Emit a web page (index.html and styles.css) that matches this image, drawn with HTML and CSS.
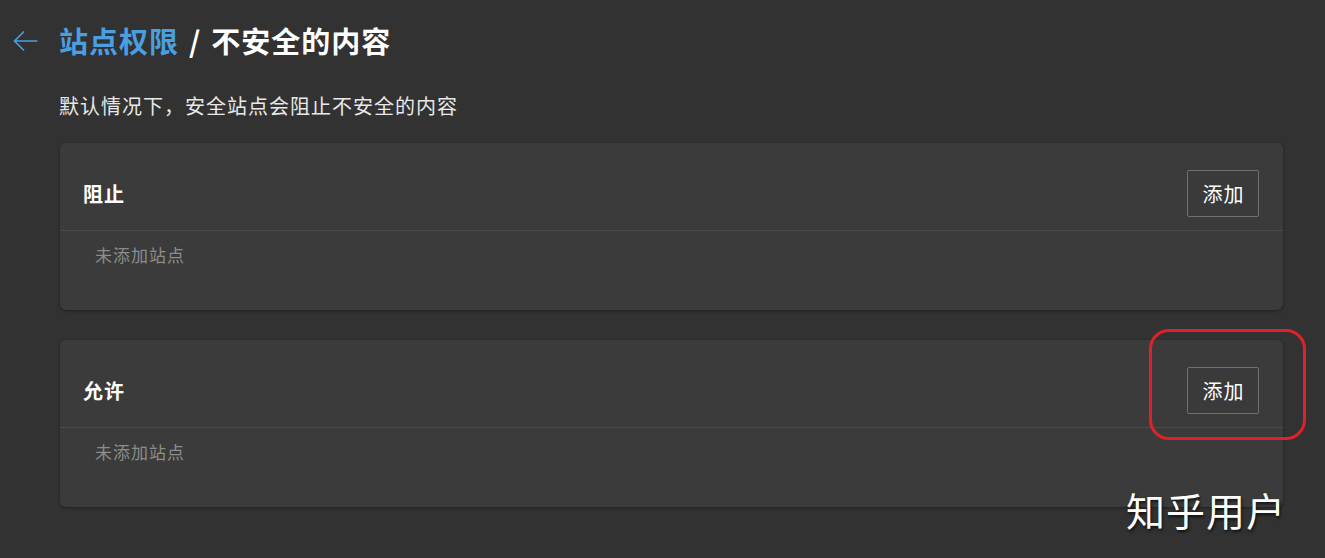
FILE: index.html
```html
<!DOCTYPE html>
<html lang="zh-CN">
<head>
  <meta charset="UTF-8">
  <title>站点权限 / 不安全的内容</title>
  <link rel="stylesheet" href="styles.css">
</head>
<body>
  <div class="page">
    <header class="page-header">
      <a class="back" href="#" aria-label="返回">
        <svg width="26" height="22" viewBox="0 0 26 22">
          <path d="M25.5 11H2.5M12 1.5L2.5 11L12 20.5" fill="none" stroke="#4a9fe0" stroke-width="1.6"/>
        </svg>
      </a>
      <h1><span class="crumb">站点权限</span><span class="sep">/</span>不安全的内容</h1>
    </header>

    <p class="intro">默认情况下，安全站点会阻止不安全的内容</p>

    <section class="card">
      <div class="card-head">
        <h2>阻止</h2>
        <button type="button">添加</button>
      </div>
      <div class="card-body">未添加站点</div>
    </section>

    <section class="card">
      <div class="card-head">
        <h2>允许</h2>
        <div class="mark">
          <button type="button">添加</button>
        </div>
      </div>
      <div class="card-body">未添加站点</div>
    </section>
  </div>

  <div class="watermark">知乎用户</div>
</body>
</html>
```

FILE: styles.css
```css
html, body {
  margin: 0;
  padding: 0;
  background: #323232;
  height: 100%;
}

body {
  font-family: "Noto Sans CJK SC", "Noto Sans", sans-serif;
  color: #fff;
  overflow: hidden;
}

.page {
  padding: 16px 42px 0 12px;
}

.page-header {
  display: flex;
  align-items: center;
  height: 48px;
}

.back {
  display: flex;
  width: 47px;
  margin-top: 2px;
}

h1 {
  margin: 0;
  font-size: 29px;
  font-weight: bold;
  letter-spacing: 1px;
}

.crumb {
  color: #4a9fe0;
}

.sep {
  margin: 0 10px 0 10px;
}

.intro {
  margin: 26px 0 21px 47px;
  font-size: 20px;
  line-height: 32px;
  letter-spacing: 1px;
  color: #e8e8e8;
}

.card {
  margin-left: 48px;
  margin-bottom: 30px;
  background: #3b3b3b;
  border-radius: 6px;
  box-shadow: 0 1px 3px rgba(0, 0, 0, 0.4);
}

.card-head {
  display: flex;
  align-items: center;
  justify-content: space-between;
  padding: 27px 24px 13px 23px;
  border-bottom: 1px solid #4b4b4b;
}

h2 {
  margin: 0;
  font-size: 20px;
  font-weight: bold;
  letter-spacing: 1px;
}

button {
  width: 72px;
  height: 47px;
  background: #3a3a3a;
  border: 1px solid #707070;
  border-radius: 2px;
  color: #fff;
  font-family: inherit;
  font-size: 20px;
  letter-spacing: 1px;
  padding: 0 0 0 1px;
}

.mark {
  position: relative;
}

.mark::after {
  content: "";
  position: absolute;
  left: -38px;
  top: -38px;
  width: 151px;
  height: 105px;
  border: 3px solid #e0202a;
  border-radius: 20px;
}

.card-body {
  padding: 12px 35px 43px;
  font-size: 17px;
  line-height: 24px;
  letter-spacing: 1px;
  color: #8c8c8c;
}

.watermark {
  position: absolute;
  left: 1126px;
  top: 483px;
  font-size: 39px;
  line-height: 52px;
  letter-spacing: 1px;
  color: #fff;
  text-shadow: 1px 2px 3px rgba(0, 0, 0, 0.7);
}
```
